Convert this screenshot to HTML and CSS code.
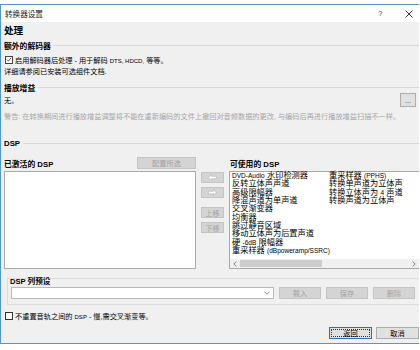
FILE: index.html
```html
<!DOCTYPE html>
<html lang="zh-CN">
<head>
<meta charset="utf-8">
<title>转换器设置</title>
<link rel="stylesheet" href="styles.css">
</head>
<body>
<div class="window">
  <div class="titlebar">
    <span class="title">转换器设置</span>
    <span class="tb-help">?</span>
    <span class="tb-close"><svg width="8" height="8" viewBox="0 0 8 8"><path d="M0.5 0.5L7.5 7.5M7.5 0.5L0.5 7.5" stroke="#222" stroke-width="0.9" fill="none"/></svg></span>
  </div>
  <div class="content">
    <div class="h1">处理</div>
    <div class="group-head"><span>额外的解码器</span><i></i></div>
    <div class="check-row r-decoder"><span class="cb checked"><svg width="7" height="7" viewBox="0 0 7 7"><path d="M1 3.6L2.8 5.4L6 1.4" stroke="#222" stroke-width="0.9" fill="none"/></svg></span><span>启用解码器后处理 - 用于解码 <span class="lat">DTS, HDCD,</span> 等等。</span></div>
    <div class="line r-details">详细请参阅已安装可选组件文档.</div>
    <div class="group-head r-gain"><span>播放增益</span><i></i></div>
    <div class="gain-row"><span>无。</span><span class="btn btn-dots">...</span></div>
    <div class="line warn">警告: 在转换期间进行播放增益调整将不能在重新编码的文件上撤回对音频数据的更改, 与编码后再进行播放增益扫描不一样。</div>
    <div class="group-head r-dsp"><span>DSP</span><i></i></div>
    <div class="dsp">
      <div class="dsp-label left"><b>已激活的 DSP</b><span class="btn disabled btn-config">配置所选</span></div>
      <div></div>
      <div class="dsp-label right"><b>可使用的 DSP</b></div>
      <div class="listbox active-list"></div>
      <div class="movebtns">
        <span class="btn disabled arrow"><svg width="9" height="7" viewBox="0 0 9 7"><path d="M0.5 3.5L3.5 0.5V2.3H8.5V4.7H3.5V6.5Z" fill="#fff" stroke="#b4b4b4" stroke-width="0.6"/></svg></span>
        <span class="btn disabled arrow"><svg width="9" height="7" viewBox="0 0 9 7"><path d="M8.5 3.5L5.5 0.5V2.3H0.5V4.7H5.5V6.5Z" fill="#fff" stroke="#b4b4b4" stroke-width="0.6"/></svg></span>
        <span class="btn disabled mv up">上移</span>
        <span class="btn disabled mv">下移</span>
      </div>
      <div class="listbox avail-list">
        <div class="cols">
          <ul class="col">
            <li><span class="lat">DVD-Audio</span> 水印检测器</li>
            <li>反转立体声声道</li>
            <li>高级限幅器</li>
            <li>降混声道为单声道</li>
            <li>交叉渐变器</li>
            <li>均衡器</li>
            <li>跳过静音区域</li>
            <li>移动立体声为后置声道</li>
            <li>硬 <span class="lat">-6dB</span> 限幅器</li>
            <li>重采样器 <span class="lat">(dBpoweramp/SSRC)</span></li>
          </ul>
          <ul class="col">
            <li>重采样器 <span class="lat">(PPHS)</span></li>
            <li>转换单声道为立体声</li>
            <li>转换立体声为 <span class="lat">4</span> 声道</li>
            <li>转换声道为立体声</li>
          </ul>
        </div>
        <div class="hscroll">
          <span class="sa"><svg width="4" height="6" viewBox="0 0 4 6"><path d="M3.3 0.5L0.8 3L3.3 5.5" stroke="#606060" stroke-width="0.8" fill="none"/></svg></span>
          <span class="track"><span class="thumb"></span></span>
          <span class="sa"><svg width="4" height="6" viewBox="0 0 4 6"><path d="M0.7 0.5L3.2 3L0.7 5.5" stroke="#606060" stroke-width="0.8" fill="none"/></svg></span>
        </div>
      </div>
    </div>
    <div class="preset">
      <div class="preset-title">DSP 列预设</div>
      <div class="preset-row">
        <div class="combo"><svg width="6" height="4" viewBox="0 0 6 4"><path d="M0.5 0.7L3 3.2L5.5 0.7" stroke="#707070" stroke-width="0.8" fill="none"/></svg></div>
        <span class="btn disabled pb">载入</span>
        <span class="btn disabled pb">保存</span>
        <span class="btn disabled pb">删除</span>
      </div>
    </div>
    <div class="check-row r-reset"><span class="cb"></span><span>不重置音轨之间的 <span class="lat">DSP</span> - 慢,需交叉渐变等。</span></div>
    <div class="footer">
      <span class="btn fb focus"><span class="focus-inner">返回</span></span>
      <span class="btn fb">取消</span>
    </div>
  </div>
</div>
</body>
</html>
```

FILE: styles.css
```css
* { box-sizing: border-box; }

html, body {
  margin: 0;
  padding: 0;
  background: #ffffff;
}

body {
  font-family: "Liberation Sans", "Noto Sans CJK SC", sans-serif;
  font-size: 7.2px;
  color: #000;
}

.lat { font-size: 0.84em; }

.window {
  margin-top: 4px;
  width: 419px;
  height: 340px;
  border: 1px solid #4f98d8;
  border-right: none;
  background: #f0f0f0;
  display: flex;
  flex-direction: column;
  overflow: hidden;
}

.titlebar {
  height: 17px;
  flex: none;
  background: #ffffff;
  display: flex;
  align-items: center;
  padding-left: 4px;
  font-size: 7.6px;
  color: #222;
}

.title { flex: 1; }

.tb-help {
  width: 27px;
  font-size: 8px;
  color: #444;
}

.tb-close {
  width: 14px;
  display: flex;
  align-items: center;
}

.content {
  flex: 1;
  padding-left: 3px;
  display: flex;
  flex-direction: column;
}

.h1 {
  height: 18px;
  line-height: 18px;
  font-size: 9.6px;
  font-weight: bold;
  flex: none;
}

.group-head {
  height: 10px;
  display: flex;
  align-items: center;
  font-weight: bold;
  font-size: 7.8px;
  flex: none;
}

.group-head i {
  flex: 1;
  height: 1px;
  background: #d8d8d8;
  margin-left: 3px;
}

.check-row {
  height: 9px;
  display: flex;
  align-items: center;
  flex: none;
}

.r-decoder { margin-top: 5px; }
.r-reset { margin-top: 6px; }

.cb {
  width: 8px;
  height: 8px;
  border: 1px solid #333;
  background: #fff;
  margin-left: 1px;
  margin-right: 2px;
  display: flex;
  align-items: center;
  justify-content: center;
  flex: none;
}

.cb.checked { border-color: #444; }

.line {
  height: 9px;
  line-height: 9px;
  flex: none;
  white-space: nowrap;
}

.r-details { margin-top: 3px; }
.r-gain { margin-top: 6px; }

.gain-row {
  height: 14px;
  margin-top: 1px;
  display: flex;
  align-items: center;
  justify-content: space-between;
  padding-right: 3px;
  flex: none;
}

.btn {
  display: flex;
  align-items: center;
  justify-content: center;
  background: #e1e1e1;
  border: 1px solid #adadad;
  color: #000;
  flex: none;
}

.btn-dots {
  width: 16px;
  height: 14px;
  font-size: 7px;
  color: #333;
}

.btn.disabled {
  background: #d4d4d4;
  border-color: #c4c4c4;
  color: #a3a3a3;
}

.warn {
  margin-top: 5px;
  height: 10px;
  line-height: 10px;
  color: #a6a6a6;
  font-size: 7.2px;
}

.r-dsp { margin-top: 16px; }

.dsp {
  margin-top: 9px;
  display: grid;
  grid-template-columns: 193px 22px 1fr;
  grid-template-rows: 12px 98px;
  column-gap: 5px;
  row-gap: 2px;
  flex: none;
}

.dsp-label {
  display: flex;
  align-items: center;
  justify-content: space-between;
}

.dsp-label b { font-size: 7.8px; }

.dsp-label.right { padding-left: 1px; }

.btn-config {
  width: 59px;
  height: 12px;
  margin-right: 1px;
  font-size: 7.2px;
}

.listbox {
  background: #fff;
  border: 1px solid #a9a9a9;
}

.active-list { margin-right: 1px; }

.movebtns {
  display: flex;
  flex-direction: column;
  padding-top: 1px;
  margin-left: -1px;
}

.movebtns .btn {
  height: 11px;
  margin-bottom: 4px;
  font-size: 7px;
}

.movebtns .up { margin-top: 5px; }

.avail-list {
  display: flex;
  flex-direction: column;
  border-right: none;
}

.cols {
  flex: 1;
  display: flex;
  padding-left: 2px;
  padding-top: 0;
}

.col {
  list-style: none;
  margin: 0;
  padding: 0;
  font-size: 8.2px;
  line-height: 8.33px;
  white-space: nowrap;
}

.col .lat { font-size: 0.8em; }

.col:first-child { width: 97px; }

.hscroll {
  height: 9px;
  display: flex;
  align-items: center;
  background: #f0f0f0;
  flex: none;
}

.sa {
  width: 10px;
  display: flex;
  align-items: center;
  justify-content: center;
}

.track {
  flex: 1;
  height: 7px;
  display: flex;
}

.thumb {
  width: 82px;
  height: 7px;
  background: #cdcdcd;
}

.preset {
  margin-top: 9px;
  margin-left: 3px;
  height: 27px;
  border: 1px solid #dcdcdc;
  border-right: none;
  flex: none;
  display: flex;
  flex-direction: column;
}

.preset-title {
  height: 7px;
  line-height: 7px;
  padding-left: 2px;
  font-weight: bold;
  font-size: 7.6px;
  margin-top: -1px;
}

.preset-row {
  margin-top: 2px;
  display: flex;
  align-items: center;
  padding-left: 3px;
  gap: 5px;
}

.combo {
  width: 263px;
  height: 12px;
  background: #fff;
  border: 1px solid #b9b9b9;
  display: flex;
  align-items: center;
  justify-content: flex-end;
  padding-right: 3px;
}

.pb {
  width: 42px;
  height: 12px;
  font-size: 7.2px;
}

.footer {
  margin-top: 7px;
  display: flex;
  justify-content: flex-end;
  gap: 4px;
  flex: none;
}

.fb {
  width: 43px;
  height: 12px;
  font-size: 7.2px;
}

.fb.focus {
  border-color: #2a6fc0;
  padding: 1px;
}

.focus-inner {
  width: 100%;
  height: 100%;
  border: 1px dotted #333;
  display: flex;
  align-items: center;
  justify-content: center;
}
```
